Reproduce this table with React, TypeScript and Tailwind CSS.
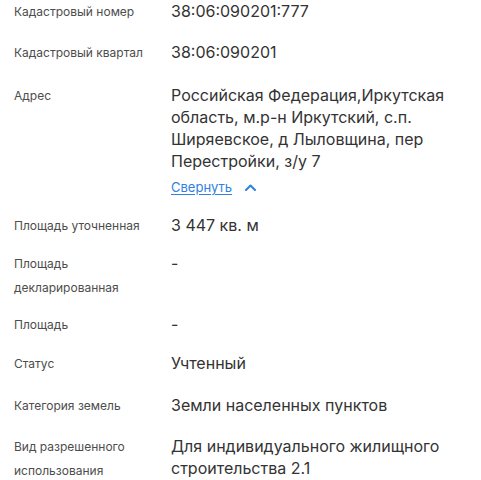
import React from 'react'

const LABEL = 'w-[157px] shrink-0 text-[12px] leading-[24px] text-[#4d4d4d]'
const VALUE = 'text-[16px] leading-[22px] text-[#333333]'

type Row = { label: React.ReactNode; value: React.ReactNode; mt: string }

function ChevronUp() {
  return (
    <svg width="11" height="7" viewBox="0 0 11 7" fill="none" className="ml-[13px] mt-[1px]">
      <path d="M1 6 L5.5 1.5 L10 6" stroke="#2f80e0" strokeWidth="2" strokeLinecap="round" strokeLinejoin="round" />
    </svg>
  )
}

export default function App() {
  const rows: Row[] = [
    { label: 'Кадастровый номер', value: '38:06:090201:777', mt: 'mt-0' },
    { label: 'Кадастровый квартал', value: '38:06:090201', mt: 'mt-[17px]' },
    {
      label: 'Адрес',
      value: (
        <div>
          <div className="w-[290px]">
            Российская Федерация,Иркутская область, м.р-н Иркутский, с.п. Ширяевское, д Лыловщина, пер Перестройки, з/у 7
          </div>
          <button className="mt-[5px] flex items-center text-[13px] leading-[20px] text-[#2f80e0] underline underline-offset-2">
            Свернуть
            <ChevronUp />
          </button>
        </div>
      ),
      mt: 'mt-[19px]',
    },
    { label: 'Площадь уточненная', value: '3 447 кв. м', mt: 'mt-[17px]' },
    { label: <>Площадь<br />декларированная</>, value: '-', mt: 'mt-[14px]' },
    { label: 'Площадь', value: '-', mt: 'mt-[13px]' },
    { label: 'Статус', value: 'Учтенный', mt: 'mt-[15px]' },
    { label: 'Категория земель', value: 'Земли населенных пунктов', mt: 'mt-[18px]' },
    { label: <>Вид разрешенного<br />использования</>, value: 'Для индивидуального жилищного строительства 2.1', mt: 'mt-[17px]' },
  ]

  return (
    <div className="min-h-[480px] w-[481px] bg-white pl-[14px] font-['Inter','Noto_Sans',sans-serif]">
      {rows.map((r, i) => (
        <div key={i} className={`flex items-start ${r.mt}`}>
          <div className={LABEL}>{r.label}</div>
          <div className={`${VALUE} w-[290px]`}>{r.value}</div>
        </div>
      ))}
    </div>
  )
}
